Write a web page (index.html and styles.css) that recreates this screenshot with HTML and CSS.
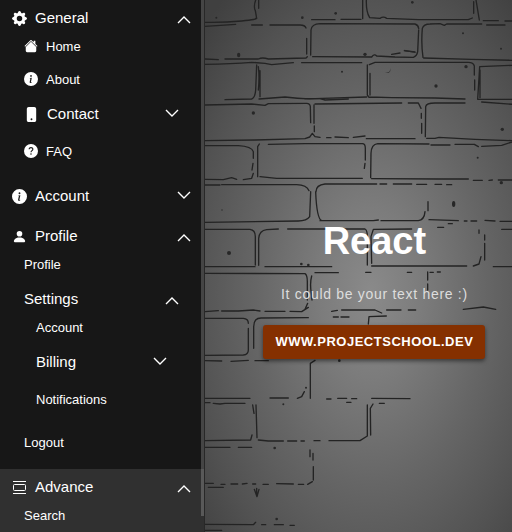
FILE: index.html
```html
<!DOCTYPE html>
<html lang="en">
<head>
<meta charset="utf-8">
<meta name="viewport" content="width=device-width, initial-scale=1">
<title>React</title>
<link rel="stylesheet" href="styles.css">
</head>
<body>
<svg class="defs" aria-hidden="true">
  <symbol id="up" viewBox="0 0 14 8"><path d="M1 7 7 1l6 6" fill="none" stroke="currentColor" stroke-width="1.4"/></symbol>
  <symbol id="down" viewBox="0 0 14 8"><path d="m1 1 6 6 6-6" fill="none" stroke="currentColor" stroke-width="1.4"/></symbol>
  <symbol id="info" viewBox="0 0 16 16"><path fill="currentColor" fill-rule="evenodd" d="M8 16A8 8 0 1 0 8 0a8 8 0 0 0 0 16Zm.93-9.41-1 4.7c-.07.34.03.53.3.53.2 0 .49-.07.69-.25l-.09.42c-.29.35-.92.6-1.47.6-.71 0-1.01-.43-.82-1.33l.74-3.46c.06-.3.01-.4-.29-.47l-.45-.08.08-.38 2.31-.28ZM8 5.5a1 1 0 1 1 0-2 1 1 0 0 1 0 2Z"/></symbol>
</svg>
<div class="app">
  <nav class="sidebar" aria-label="Main">
    <ul class="menu">
      <li class="group">
        <button class="toggle" aria-expanded="true">
          <svg class="icon" viewBox="0 0 16 16"><path fill="currentColor" fill-rule="evenodd" d="M9.4 1.05c-.41-1.4-2.39-1.4-2.8 0l-.1.34a1.46 1.46 0 0 1-2.1.87l-.31-.17c-1.28-.7-2.69.71-1.99 1.99l.17.31c.45.82.02 1.84-.87 2.11l-.34.1c-1.4.41-1.4 2.39 0 2.8l.34.1a1.46 1.46 0 0 1 .87 2.1l-.17.31c-.7 1.28.71 2.69 1.99 1.99l.31-.17a1.46 1.46 0 0 1 2.11.87l.1.34c.41 1.4 2.39 1.4 2.8 0l.1-.34a1.46 1.46 0 0 1 2.1-.87l.31.17c1.28.7 2.69-.71 1.99-1.99l-.17-.31a1.46 1.46 0 0 1 .87-2.11l.34-.1c1.4-.41 1.4-2.39 0-2.8l-.34-.1a1.46 1.46 0 0 1-.87-2.1l.17-.31c.7-1.28-.71-2.69-1.99-1.99l-.31.17a1.46 1.46 0 0 1-2.11-.87ZM8 10.93a2.93 2.93 0 1 1 0-5.86 2.93 2.93 0 0 1 0 5.86Z"/></svg>
          <span>General</span><svg class="chevron"><use href="#up"/></svg>
        </button>
        <ul class="submenu">
          <li><a class="link" href="#home"><svg class="icon small" viewBox="0 0 16 16"><path fill="currentColor" d="m8 3 6 6v4.500c0 .8-.7 1.500-1.500 1.500h-9C2.700 15 2 14.300 2 13.500V9Z"/><path fill="currentColor" d="M7.300 1.500a1 1 0 0 1 1.400 0L11 3.800V2.500c0-.3.200-.5.500-.5h1c.3 0 .5.200.5.500v3.300l2.400 2.300-.7.700L8 2.200 1.300 8.800l-.7-.7Z"/></svg><span>Home</span></a></li>
          <li><a class="link" href="#about"><svg class="icon small"><use href="#info"/></svg><span>About</span></a></li>
          <li class="group">
            <button class="toggle" aria-expanded="false">
              <svg class="icon" viewBox="0 0 16 16"><path fill="currentColor" fill-rule="evenodd" d="M5 0h6c1.100 0 2 .9 2 2v12c0 1.100-.9 2-2 2H5c-1.100 0-2-.9-2-2V2c0-1.100.9-2 2-2Zm3 14a1 1 0 1 0 0-2 1 1 0 0 0 0 2Z"/></svg>
              <span>Contact</span><svg class="chevron"><use href="#down"/></svg>
            </button>
          </li>
          <li><a class="link" href="#faq"><svg class="icon small" viewBox="0 0 16 16"><circle cx="8" cy="8" r="8" fill="currentColor"/><path d="M5.900 6C5.900 3.500 10.200 3.600 10.100 6c0 1.500-2.100 1.600-2.100 3.400" fill="none" stroke="#171717" stroke-width="1.300"/><circle cx="8" cy="11.500" r=".9" fill="#171717"/></svg><span>FAQ</span></a></li>
        </ul>
      </li>
      <li class="group">
        <button class="toggle" aria-expanded="false"><svg class="icon"><use href="#info"/></svg><span>Account</span><svg class="chevron"><use href="#down"/></svg></button>
      </li>
      <li class="group">
        <button class="toggle" aria-expanded="true">
          <svg class="icon" viewBox="0 0 16 16"><circle cx="8" cy="5" r="3" fill="currentColor"/><path fill="currentColor" d="M3 14s-1 0-1-1 1-4 6-4 6 3 6 4-1 1-1 1Z"/></svg>
          <span>Profile</span><svg class="chevron"><use href="#up"/></svg>
        </button>
        <ul class="submenu">
          <li><a class="link" href="#profile">Profile</a></li>
          <li class="group">
            <button class="toggle" aria-expanded="true"><span>Settings</span><svg class="chevron"><use href="#up"/></svg></button>
            <ul class="submenu">
              <li><a class="link" href="#settings-account">Account</a></li>
              <li class="group"><button class="toggle" aria-expanded="false"><span>Billing</span><svg class="chevron"><use href="#down"/></svg></button></li>
              <li><a class="link" href="#notifications">Notifications</a></li>
            </ul>
          </li>
          <li><a class="link" href="#logout">Logout</a></li>
        </ul>
      </li>
      <li class="group active">
        <button class="toggle" aria-expanded="true">
          <svg class="icon" viewBox="0 0 15 15" fill="none" stroke="currentColor"><path d="M1 1.500h13M1 13.500h13"/><rect x="1.500" y="4.500" width="12" height="6" rx="1"/></svg>
          <span>Advance</span><svg class="chevron"><use href="#up"/></svg>
        </button>
        <ul class="submenu">
          <li><a class="link" href="#search">Search</a></li>
        </ul>
      </li>
    </ul>
    <div class="scroll-thumb"></div>
  </nav>
  <main class="hero">
    <svg class="wall" viewBox="0 0 924 1596" preserveAspectRatio="xMinYMin slice" aria-hidden="true">
      <g fill="none" stroke="#232323" stroke-width="4" stroke-linecap="round" stroke-linejoin="round">
        <path d="M0 67Q60 68 110 63T152 55M152 0Q145 20 151 32L155 55M161 0V25M0 79 92 73M140 75H172M195 75H285Q300 75 303 84M320 59H390M408 58H468M473 0V56M484 0Q483 35 494 53L525 55Q535 48 545 55L640 59H790L802 54M806 5V40M813 0 823 60M835 62H880M900 63H924"/>
        <path d="M305 115V162M307 170 303 174 190 177Q172 171 160 177H60M40 179 0 177M317 165 318 90Q320 72 345 71L630 72Q640 75 641 85M323 170 500 171Q508 160 515 168L570 171 625 172Q636 168 638 155L641 90M560 163 585 159M598 152 630 156M654 172Q648 130 652 85 656 72 675 72L705 71 718 76 725 72H830M845 75H900"/>
        <path d="M656 174 800 178 924 181M0 193Q80 192 140 187L180 190 200 194 265 188M290 188H470M493 194 510 187H790Q805 187 808 198V225M809 240V270M155 195 152 270Q150 294 140 297L60 299M160 200Q164 230 160 270M165 212V290M162 297 240 291Q290 298 330 296L485 291M487 195 487 285 492 292M495 220V285M492 291 560 293 690 294 780 297M818 298 824 200 924 196M825 293V210M820 298H924"/>
        <path d="M0 315 140 312 180 316 190 311 305 310Q315 310 316 320L317 368M300 296H345L360 300 430 297M327 315V370M328 378V395M330 312 590 309M610 309H640L648 325M649 340V355M650 370V400M661 410 662 320Q664 309 690 309L780 309M830 306 924 313M0 422 150 420 300 416 314 411 322 400 330 410 345 412M365 413H378M390 411 430 413M445 412 480 408M484 416H630M665 415H690L702 412 810 418 924 422"/>
        <path d="M0 437 100 437Q140 439 145 455V475M144 490 141 510M158 530V440L163 432M165 530 215 535H472M190 433 300 431 472 431Q481 431 481 445V480M480 490 478 505M497 533 498 460Q499 433 518 431L672 432M678 435H735M750 433H808L820 440M830 439 890 436 924 425M0 538 55 539 80 533 95 538M115 539 140 535 145 520M500 536 700 537H790M805 541H832M852 541 862 540M880 540H924"/>
        <path d="M0 555 45 555M50 554 275 554Q305 555 312 572M317 575 314 650Q305 663 280 663L0 667M333 575Q333 555 360 552L515 552M350 662Q335 655 332 575M525 552H545M565 552H620M635 553H665M690 553H710M725 554H740M345 662 505 662 520 660M528 662H640Q658 660 660 635M669 605V632M672 659 760 662M778 663H786M798 663H815M840 661 870 663M885 664H924M730 671H742M698 682H716M890 688H924"/>
        <path d="M0 688 135 688Q151 690 151 710V795M161 796V715Q163 692 185 689L220 687M248 687 480 687Q487 690 487 710V795M500 790 498 710 505 688 620 687M500 798H785M822 690V700M839 705V720M839 730V780M828 770 822 792 805 798M865 800H924"/>
        <path d="M0 800 150 800M180 800H380M0 820 300 821Q307 825 307 845V900M320 828Q314 850 319 880L321 900M308 910 300 928M330 818H400M482 817H498M607 817H620M668 816V840M668 852V870M675 817H685M697 816H706M0 935 40 932M50 933H100L145 930 165 933M180 934H240M255 934 290 935 310 922M380 934 397 931M410 930H510L530 939M545 930H588M610 930H632M775 928 835 921 872 928"/>
        <path d="M0 955H115Q130 956 130 970M130 985V1050Q130 1064 115 1065L0 1066M146 1045V980Q146 953 170 954L310 953M385 951H400M408 951H432M490 972 492 950 544 948M0 1082 50 1083M78 1084 130 1081M150 1082H190M316 1195V1090L330 1081M0 1195H135M195 1194H250M277 1195 290 1190 298 1175M365 1197H378M398 1195H425M440 1196H455M500 1195 615 1196M425 1207H438M523 1210H538"/>
        <path d="M0 1208H15M25 1210 45 1212 60 1210H120M143 1215 147 1240M141 1305 137 1320 0 1322M153 1215 156 1313M160 1320 190 1323H235M248 1323H275M288 1323H298M327 1322H345M372 1322H465L487 1308V1215M497 1305 496 1225 504 1212M0 1342H75M100 1342H140M315 1350V1370M324 1360V1380M325 1400V1440M0 1450 25 1450M48 1453H60M78 1452H98M112 1452 126 1450M143 1452H152M174 1453H190M215 1451 265 1452M280 1453H296M308 1453 322 1445M10 1462H55M148 1468 156 1490 162 1468M155 1465V1480M0 1573 145 1574 152 1567M170 1574H182M208 1574H235M255 1576H268M0 1591H50"/>
      </g>
      <g fill="#272727">
        <ellipse cx="101" cy="165" rx="5" ry="7"/><circle cx="34" cy="53" r="3"/><circle cx="292" cy="53" r="4"/><circle cx="392" cy="40" r="4"/><circle cx="622" cy="7" r="4"/><circle cx="480" cy="163" r="5"/><circle cx="411" cy="215" r="3"/><circle cx="145" cy="339" r="5"/><circle cx="783" cy="200" r="5"/><circle cx="892" cy="388" r="5"/><circle cx="889" cy="548" r="5"/><ellipse cx="746" cy="612" rx="5" ry="9"/><circle cx="72" cy="759" r="6"/><circle cx="693" cy="258" r="5"/><circle cx="888" cy="146" r="3"/><circle cx="774" cy="100" r="3"/><circle cx="818" cy="473" r="3"/><circle cx="51" cy="630" r="2"/><circle cx="289" cy="792" r="4"/><circle cx="310" cy="795" r="4"/><circle cx="209" cy="1344" r="4"/><circle cx="215" cy="1557" r="4"/><circle cx="235" cy="1213" r="3"/><circle cx="303" cy="1163" r="3"/><circle cx="403" cy="1082" r="4"/>
        <path d="m540 217 15-1 2-11-5 14ZM598 149l30 6 8 4-38-5Z"/>
      </g>
    </svg>
    <div class="content">
      <h1>React</h1>
      <p>It could be your text here :)</p>
      <a class="cta" href="#projectschool">WWW.PROJECTSCHOOL.DEV</a>
    </div>
  </main>
</div>
</body>
</html>
```
FILE: styles.css
```css
* { box-sizing: border-box; }

body {
  margin: 0;
  font-family: "Liberation Sans", Arial, sans-serif;
  color: #fff;
  background: #171717;
}

.defs { position: absolute; width: 0; height: 0; }

.app { display: flex; height: 100vh; overflow: hidden; }

.sidebar {
  position: relative;
  flex: 0 0 40%;
  overflow: hidden;
  background: #171717;
  border-right: 1px solid #282828;
}

.scroll-thumb {
  position: absolute;
  top: 0;
  right: 0;
  width: 3px;
  height: 97%;
  background: rgba(255, 255, 255, 0.2);
}

.menu, .submenu { list-style: none; margin: 0; padding: 0; }

.menu > .group { padding: 0 13px 0 12px; margin-bottom: 4px; }
.menu > .active { background: #303030; }

.submenu { padding: 0 12px 6px; }
.submenu .submenu { padding-bottom: 7px; }
.submenu > .group { margin-bottom: 9px; }

.toggle {
  display: flex;
  align-items: center;
  gap: 8px;
  width: 100%;
  height: 36px;
  padding: 0;
  border: 0;
  background: none;
  color: inherit;
  font: inherit;
  font-size: 15px;
  line-height: 16px;
  text-align: left;
  cursor: pointer;
}

.link {
  display: flex;
  align-items: center;
  gap: 8px;
  height: 20px;
  margin-bottom: 7px;
  color: inherit;
  font-size: 13px;
  text-decoration: none;
}

li:not(.group) + li:not(.group) { padding-top: 6px; }

.icon { flex: none; width: 15px; height: 15px; }
.small { width: 14px; height: 14px; }
.chevron { flex: none; width: 14px; height: 8px; margin-left: auto; }
.toggle[aria-expanded="true"] .chevron { margin-top: 3px; }
.toggle[aria-expanded="false"] .chevron { margin-bottom: 2px; }

.hero {
  position: relative;
  flex: 1;
  display: flex;
  align-items: center;
  justify-content: center;
  padding-left: 32px;
  overflow: hidden;
  background: radial-gradient(ellipse 75% 72% at 54% 55%, #8a8a8a 0%, #7c7c7c 22%, #666 50%, #525252 78%, #404040 100%);
}

.wall { position: absolute; inset: 0; width: 100%; height: 100%; }

.content { position: relative; padding-top: 46px; text-align: center; }

h1 { margin: 0; font-size: 38px; line-height: 44px; }

p {
  margin: 21px 0;
  color: #ddd;
  font-size: 14px;
  line-height: 20px;
  letter-spacing: 0.05em;
}

.cta {
  display: inline-block;
  padding: 0 12px;
  border-radius: 3px;
  background: #853000;
  box-shadow: 0 2px 4px rgba(0, 0, 0, 0.5);
  color: #fff;
  font-size: 13px;
  font-weight: 700;
  line-height: 34px;
  letter-spacing: 0.04em;
  text-decoration: none;
}
```
